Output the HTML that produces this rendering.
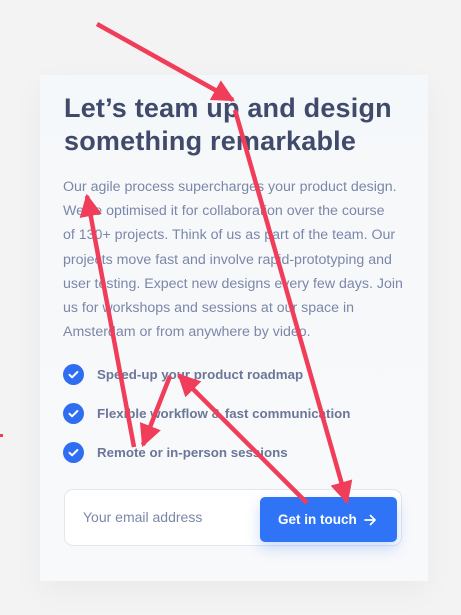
<!DOCTYPE html>
<html><head><meta charset="utf-8"><style>
*{margin:0;padding:0;box-sizing:border-box}
body{width:461px;height:615px;background:#f3f3f3;position:relative;overflow:hidden;font-family:"Liberation Sans",sans-serif}
.card{position:absolute;left:40px;top:75px;width:388px;height:506px;background:linear-gradient(#f5f8fa,#f8f9fb);box-shadow:0 10px 30px rgba(0,0,0,0.04)}
h1{position:absolute;left:24px;top:17px;font-size:27px;line-height:33px;color:#404b6c;font-weight:bold;letter-spacing:0.2px}
.p{position:absolute;left:23px;top:100px;font-size:14.2px;line-height:24.2px;color:#7b87a9;white-space:nowrap}
.li{position:absolute;left:23px;font-size:13.3px;font-weight:bold;color:#6b7698;height:21px;line-height:21px;white-space:nowrap}
.li i{position:absolute;left:0;top:0;width:21px;height:21px;border-radius:50%;background:#2f6ef0}
.li span{position:absolute;left:34px;top:0}
.form{position:absolute;left:24px;top:414px;width:338px;height:57px;background:#fff;border:1px solid #e1e6ef;border-radius:9px}
.form .ph{position:absolute;left:18px;top:19px;font-size:14px;color:#7b87a9}
.btn{position:absolute;left:195px;top:7px;width:137px;height:45px;background:#2f74f6;border-radius:5px;color:#fff;font-weight:bold;font-size:13.5px;line-height:45px;padding-left:18px;box-shadow:0 6px 14px rgba(47,116,246,0.25)}
.btn svg{position:absolute;left:104px;top:17px}
svg{position:absolute;left:0;top:0}
</style></head><body>
<div class="card">
<h1>Let’s team up and design<br>something remarkable</h1>
<div class="p">Our agile process supercharges your product design.<br>We’ve optimised it for collaboration over the course<br>of 130+ projects. Think of us as part of the team. Our<br>projects move fast and involve rapid-prototyping and<br>user testing. Expect new designs every few days. Join<br>us for workshops and sessions at our space in<br>Amsterdam or from anywhere by video.</div>
<div class="li" style="top:289px"><i></i><svg width="21" height="21" viewBox="0 0 21 21"><path d="M6.5 10.8l2.6 2.5 5.3-5.3" stroke="#fff" stroke-width="2" fill="none" stroke-linecap="round" stroke-linejoin="round"/></svg><span>Speed-up your product roadmap</span></div>
<div class="li" style="top:328px"><i></i><svg width="21" height="21" viewBox="0 0 21 21"><path d="M6.5 10.8l2.6 2.5 5.3-5.3" stroke="#fff" stroke-width="2" fill="none" stroke-linecap="round" stroke-linejoin="round"/></svg><span>Flexible workflow &amp; fast communication</span></div>
<div class="li" style="top:367px"><i></i><svg width="21" height="21" viewBox="0 0 21 21"><path d="M6.5 10.8l2.6 2.5 5.3-5.3" stroke="#fff" stroke-width="2" fill="none" stroke-linecap="round" stroke-linejoin="round"/></svg><span>Remote or in-person sessions</span></div>
<div class="form"><div class="ph">Your email address</div><div class="btn">Get in touch<svg width="12" height="12" viewBox="0 0 12 12"><path d="M1 6h10M6.5 1.5L11 6l-4.5 4.5" stroke="#fff" stroke-width="1.7" fill="none" stroke-linecap="round" stroke-linejoin="round"/></svg></div></div>
</div>
<svg width="461" height="615" viewBox="0 0 461 615">
<defs><marker id="a" viewBox="0 0 10 10" refX="9" refY="5" markerWidth="5" markerHeight="5" orient="auto-start-reverse"><path d="M0 0L10 5L0 10z" fill="#f03d59"/></marker></defs>
<g stroke="#f03d59" stroke-width="4.5" fill="none" marker-end="url(#a)">
<line x1="97" y1="24" x2="233" y2="100"/>
<line x1="235" y1="110" x2="347" y2="502"/>
<line x1="134" y1="447" x2="87" y2="196"/>
<line x1="170" y1="376" x2="143" y2="445"/>
<line x1="307" y1="503" x2="179" y2="375"/>
</g>
<rect x="0" y="434" width="3" height="3" fill="#f03d59"/>
</svg>
</body></html>
